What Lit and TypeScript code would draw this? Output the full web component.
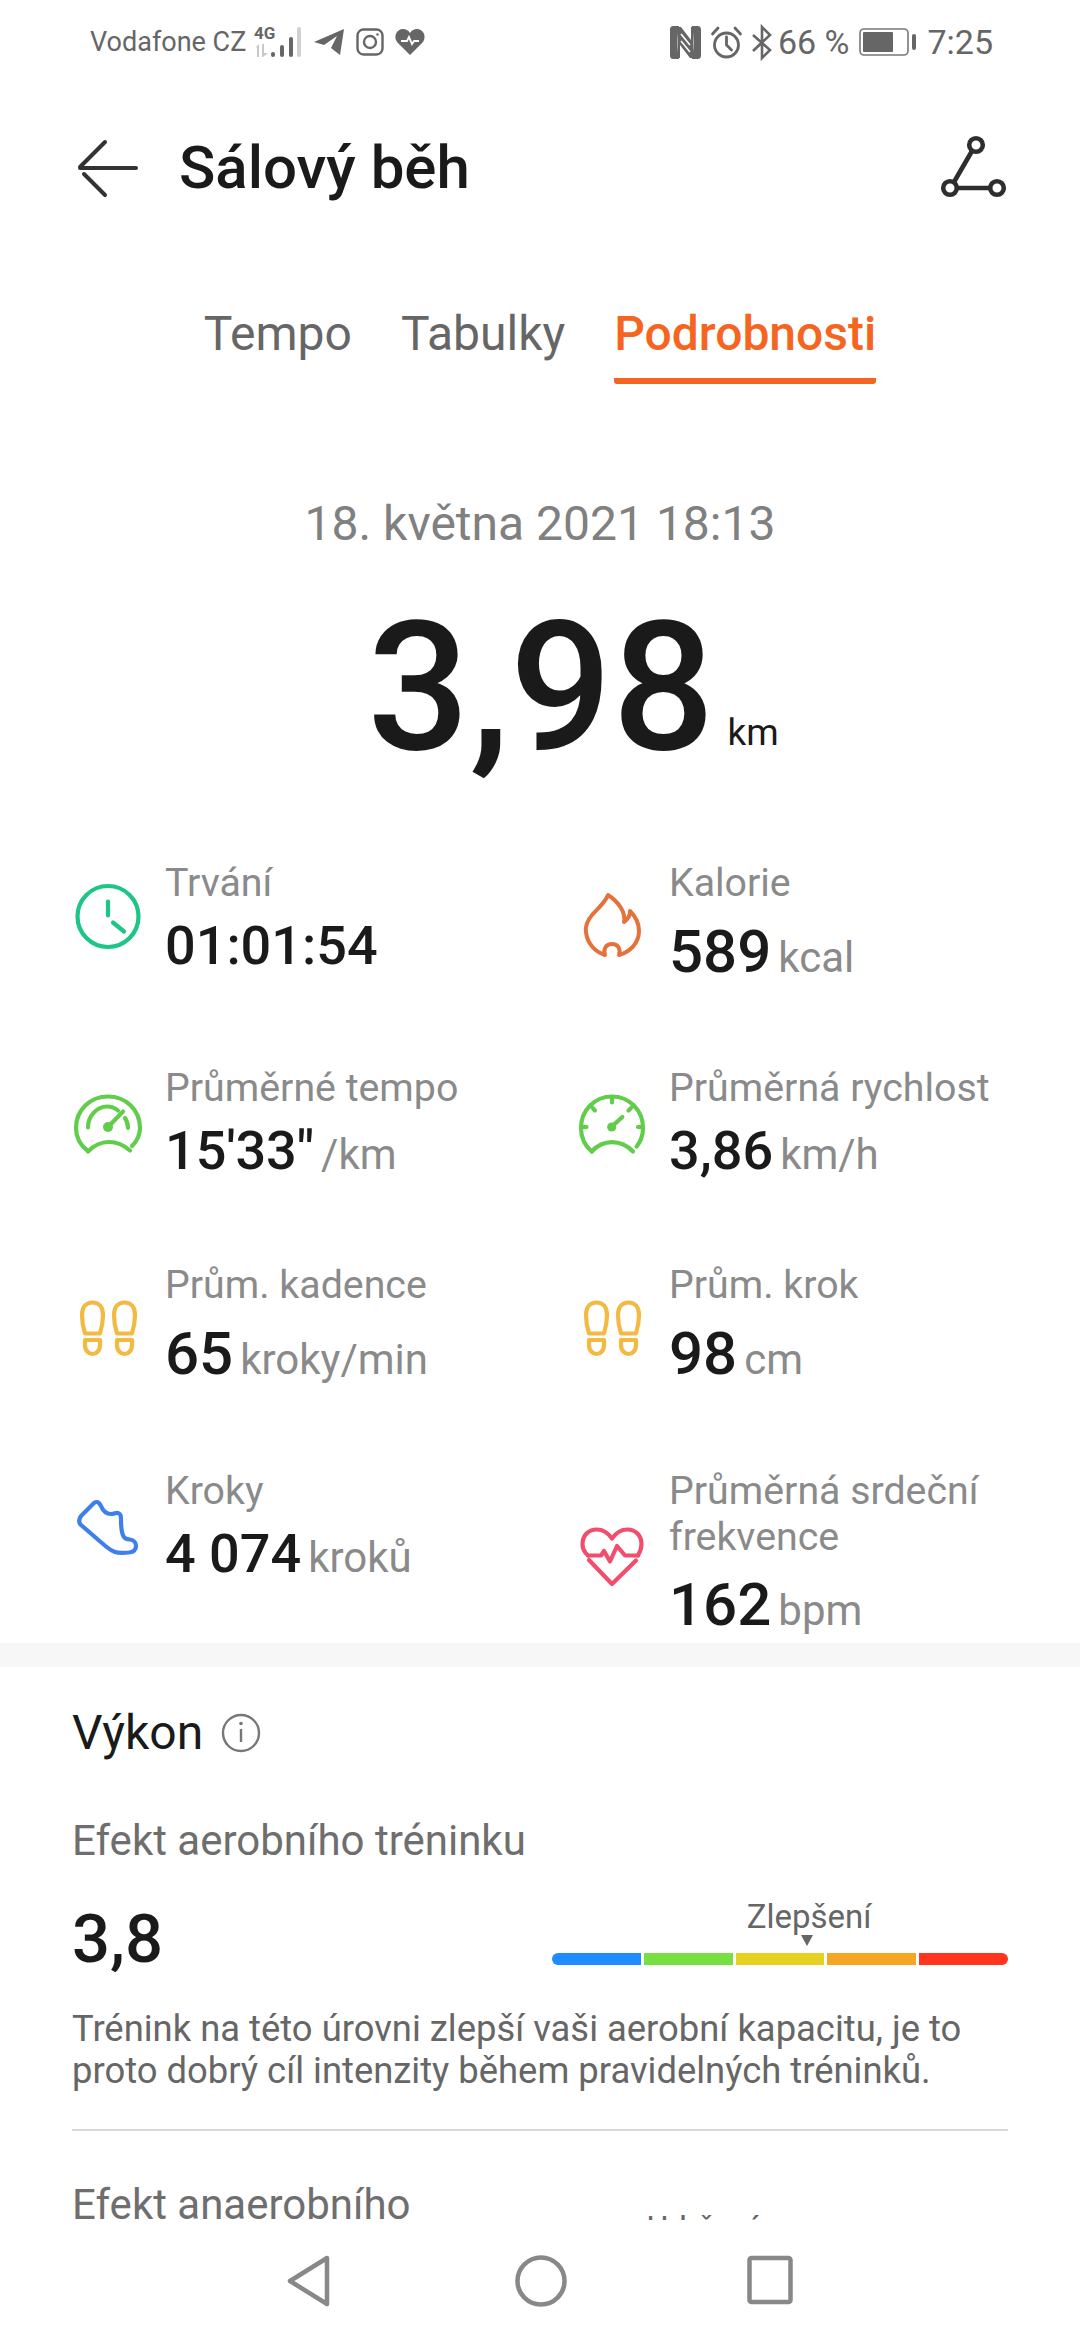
import { LitElement, html, css, svg } from "lit";
import { customElement } from "lit/decorators.js";

const G = "#666666";

const stepsIcon = svg`<g fill="none" stroke="#F3B941" stroke-width="4.2" stroke-linejoin="round"><path d="M13 42.5C11 36 10 30 10 24C10 16 14 11.5 20.5 11.5C27 11.5 31 16 31 24C31 30 30 36 28 42.5ZM45 42.5C43 36 42 30 42 24C42 16 46 11.5 52.5 11.5C59 11.5 63 16 63 24C63 30 62 36 60 42.5Z"/><path d="M13 49H28V54C28 60 24 63 20.5 63C17 63 13 60 13 54ZM45 49H60V54C60 60 56 63 52.5 63C49 63 45 60 45 54Z"/></g>`;

const icons: Record<string, unknown> = {
  clock: svg`<circle cx="36" cy="33.5" r="30.5" fill="none" stroke="#1DC587" stroke-width="4.2"/><path d="M36 18.5V32.5M41 39.5L52 48.5" fill="none" stroke="#1DC587" stroke-width="4.2" stroke-linecap="round"/>`,
  flame: svg`<path d="M32 6C29 14 21 20 16 26C11 32 9 37 10 43C11 54 19 63 29 66C27 60 30 55 36 55C42 55 45 60 43 66C54 63 63 54 63 42C63 34 59 27 54 22C54 27 51 31 48 33C50 24 43 13 32 6Z" fill="none" stroke="#E4733B" stroke-width="4" stroke-linejoin="round" stroke-linecap="round"/>`,
  gauge: svg`<g fill="none" stroke="#62CC4B" stroke-width="4.2" stroke-linecap="round"><path d="M16 61C8 55 4 47 4 38C4 20 18 6.5 36 6.5C54 6.5 68 20 68 38C68 45 65 51 60 56"/><path d="M16 61.5C28 49 45 49 58 60.5"/><path d="M16 37.5C16 26 25 16.5 35 16.5C39 16.5 43 18 46 20.5"/><path d="M53 28C55 31 56 34 56 38"/><path d="M37 36L51 21.5"/></g><circle cx="36" cy="37" r="5" fill="#62CC4B"/>`,
  gauge2: svg`<g fill="none" stroke="#62CC4B" stroke-width="4.2" stroke-linecap="round"><path d="M15.7 61.5C8.5 55.5 5 47 5 38C5 20 19 6.5 36 6.5C53 6.5 67 20 67 38C67 45 65 51 60.7 56.5"/><path d="M15.7 61.5C27 49 45 49 57 61.5"/><path d="M36 8V12.5M16.7 18L19 20.5M55 18L52.5 20.5M7 37H10.5M62 37H65"/><path d="M37 35.5L46.3 27"/></g><circle cx="35.7" cy="37" r="4.6" fill="#62CC4B"/>`,
  steps: stepsIcon,
  shoe: svg`<path d="M9 23L22 10C25 8 27 9 29 13C31 18 35 21 39 21C42 21 44 19.5 46 20C49 21 49 23 49 27C49 34 49 40 52 44C53 46 55 46 58 46.5C62 47 64 50 64 53C64 57 61 59 57 59.5C52 60 46 60 43 59C40 58 37 56 34 53.5L9 32C6 29 7 26 9 23Z" fill="none" stroke="#3F7FEC" stroke-width="4.2" stroke-linejoin="round"/>`,
  heart: svg`<g fill="none" stroke="#F24D6C" stroke-width="4.2" stroke-linejoin="round" stroke-linecap="round"><path d="M12 35.5C7 31 6.5 27 6.5 24C6.5 15 13 9.5 21 9.5C27 9.5 32 13 36 18.5C40 13 45 9.5 51 9.5C59 9.5 65.5 15 65.5 24C65.5 28 64 32 62 35.5"/><path d="M12 35.5H25L28 31L34 41.5L41 26L49 35.5H62"/><path d="M13 40L36 64L60 40.5"/></g>`,
};

const stats = [
  { icon: "clock", label: ["Trvání"], value: "01:01:54", unit: "", big: false },
  { icon: "flame", label: ["Kalorie"], value: "589", unit: "kcal", big: true },
  { icon: "gauge", label: ["Průměrné tempo"], value: "15'33\"", unit: "/km", big: false },
  { icon: "gauge2", label: ["Průměrná rychlost"], value: "3,86", unit: "km/h", big: false },
  { icon: "steps", label: ["Prům. kadence"], value: "65", unit: "kroky/min", big: true },
  { icon: "steps", label: ["Prům. krok"], value: "98", unit: "cm", big: true },
  { icon: "shoe", label: ["Kroky"], value: "4 074", unit: "kroků", big: false },
  { icon: "heart", label: ["Průměrná srdeční", "frekvence"], value: "162", unit: "bpm", big: true },
];

@customElement("app-root")
export class AppRoot extends LitElement {
  static styles = css`
    :host { display: block; width: 1080px; height: 2340px; background: #fff; overflow: hidden; font-family: Roboto, "Liberation Sans", sans-serif; color: #1a1a1a; }
    .page { display: flex; flex-direction: column; width: 1080px; height: 2340px; }
    .status { display: flex; justify-content: space-between; align-items: center; height: 84px; padding: 0 87px 0 90px; color: #666; font-size: 27px; flex: none; }
    .status .side { display: flex; align-items: center; gap: 10px; }
    .status .left { gap: 11px; }
    .status svg { display: block; flex: none; overflow: visible; }
    .status .tight { margin-left: -4px; }
    .status .sig { margin-left: -3px; margin-right: -1px; }
    .status .num { font-size: 34px; }
    .head { display: flex; align-items: center; height: 84px; margin-top: 42px; padding: 0 73px 0 76px; flex: none; }
    .head svg { display: block; overflow: visible; flex: none; }
    .head h1 { margin: 0 0 0 43px; font-size: 60px; font-weight: 500; flex: 1; line-height: 64px; }
    .tabs { display: flex; justify-content: center; gap: 49px; margin-top: 96px; flex: none; }
    .tab { font-size: 48px; line-height: 56px; color: #666; padding-bottom: 16px; border-bottom: 6px solid transparent; }
    .tab.on { color: #F5651F; font-weight: 500; border-bottom: 6px solid #F5651F; border-radius: 3px; }
    .date { text-align: center; font-size: 48px; line-height: 56px; color: #808080; margin-top: 112px; flex: none; }
    .dist { display: flex; justify-content: center; align-items: baseline; margin-top: 56px; height: 160px; padding-left: 66px; flex: none; }
    .dist b { font-size: 180px; font-weight: 500; line-height: 160px; }
    .dist span { font-size: 37px; margin: 0 0 4px 13px; position: relative; top: -4px; }
    .stats { display: grid; grid-template-columns: 504px 1fr; grid-template-rows: 205px 197px 206px 174px; align-items: start; padding: 0 0 0 72px; margin-top: 93px; flex: none; }
    .stat { display: flex; align-items: center; }
    .ic { width: 72px; height: 72px; margin-right: 21px; flex: none; }
    .ic svg { display: block; width: 72px; height: 72px; overflow: visible; }
    .lab { font-size: 39.3px; line-height: 45.5px; color: #8a8a8a; }
    .val { display: flex; align-items: baseline; margin-top: 7px; line-height: 64px; }
    .val b { font-size: 54px; font-weight: 500; color: #1a1a1a; }
    .val.big { margin-top: 13px; }
    .val.big b { font-size: 60px; }
    .val span { font-size: 42px; color: #8a8a8a; margin-left: 7px; }
    .band { height: 24px; background: #f7f7f7; flex: none; }
    .clip { flex: 1; min-height: 0; overflow: hidden; padding: 0 72px; }
    .perf { display: flex; align-items: center; margin-top: 38px; font-size: 48px; line-height: 56px; }
    .perf svg { margin-left: 18px; }
    .sub { font-size: 42px; line-height: 48px; color: #6e6e6e; margin-top: 56px; }
    .score { display: flex; justify-content: space-between; align-items: center; margin-top: 36px; height: 76px; }
    .score > b { font-size: 67px; font-weight: 500; }
    .gauge { position: relative; width: 456px; height: 76px; margin-top: -6px; }
    .gauge .t { text-align: center; font-size: 33px; line-height: 38px; color: #666; padding-left: 58px; }
    .bar { display: flex; gap: 3px; height: 12px; margin-top: 17px; }
    .bar i { flex: 1; }
    .bar i:first-child { border-radius: 6px 0 0 6px; }
    .bar i:last-child { border-radius: 0 6px 6px 0; }
    .mark { position: absolute; left: 249px; top: 37px; width: 0; height: 0; border-left: 6px solid transparent; border-right: 6px solid transparent; border-top: 11px solid #666; }
    .para { font-size: 36.4px; line-height: 42px; color: #666; margin-top: 31px; }
    hr { border: 0; border-top: 2px solid #d9d9d9; margin: 37px 0 0; }
    .anaer { display: flex; justify-content: space-between; align-items: flex-start; font-size: 42px; line-height: 48px; color: #6e6e6e; margin-top: 50px; }
    .anaer span { font-size: 33px; line-height: 38px; color: #666; margin: 29px 250px 0 0; }
    .nav { height: 120px; flex: none; display: flex; align-items: flex-start; padding: 35px 0 0 287px; gap: 184px; background: #fff; box-sizing: border-box; }
    .nav svg { display: block; }
    .nav svg:last-child { margin-left: -4px; }
  `;

  status() {
    return html`<div class="status">
      <div class="side left">
        <span>Vodafone CZ</span>
        <svg class="sig" width="50" height="34" viewBox="0 0 50 34" fill="${G}">
          <text x="0" y="14" font-size="17" font-weight="700" font-family="Roboto">4G</text>
          <path d="M2 22L5 19V32H3V23Z M8 32V19H10V28L14 28L9 32Z" fill="#c9c9c9"/>
          <rect x="17" y="27" width="4" height="5" rx="2"/><rect x="26" y="20" width="4" height="12" rx="2"/><rect x="35" y="12" width="4" height="20" rx="2"/><rect x="43" y="2" width="4" height="30" rx="2" fill="#d0d0d0"/>
        </svg>
        <svg width="31" height="28" viewBox="0 0 31 28" fill="${G}"><path d="M0 14L30 1L26 27L17 20L23 8L10 17Z"/></svg>
        <svg width="28" height="28" viewBox="0 0 28 28" fill="none" stroke="${G}" stroke-width="2.4"><rect x="1.5" y="1.5" width="25" height="25" rx="6"/><circle cx="14" cy="14" r="6"/><circle cx="21.5" cy="6.5" r="1.2" fill="${G}" stroke="none"/></svg>
        <svg width="30" height="28" viewBox="0 0 30 28"><path d="M15 27L2 14C-2 8 2 1 8 1C11 1 13 2 15 5C17 2 19 1 22 1C28 1 32 8 28 14Z" fill="${G}"/><path d="M6 13H12L14 9L17 16L19 13H24" fill="none" stroke="#fff" stroke-width="1.8"/></svg>
      </div>
      <div class="side">
        <svg width="31" height="33" viewBox="0 0 31 33" fill="${G}"><path d="M4 0H9C7 10 7 23 9 33H4C1 33 0 32 0 29V4C0 1 1 0 4 0Z"/><path d="M22 0H27C30 0 31 1 31 4V29C31 32 30 33 27 33H22C24 23 24 10 22 0Z"/><path d="M8 1H11L21 14V1H23V32H20L10 19V32H8Z"/><path d="M11 8L20 19M11 15L20 26" stroke="#fff" stroke-width="1.6"/></svg>
        <svg width="31" height="33" viewBox="0 0 31 33" fill="none" stroke="${G}" stroke-width="2.8"><circle cx="15.5" cy="19" r="12"/><path d="M15.5 11V19L20.5 24M1.5 8L7 2M29.5 8L24 2" stroke-linecap="round"/></svg>
        <svg width="20" height="33" viewBox="0 0 20 33" fill="none" stroke="${G}" stroke-width="2.6"><path d="M1 9L18 24L10 32V1L18 9L1 25"/></svg>
        <span class="num tight">66 %</span>
        <svg width="58" height="28" viewBox="0 0 58 28" fill="${G}"><rect x="1" y="1" width="48" height="26" rx="4" fill="none" stroke="#777" stroke-width="1.6"/><rect x="4" y="4" width="30" height="20" rx="1"/><rect x="53" y="6" width="4" height="16" rx="2"/></svg>
        <span class="num">7:25</span>
      </div>
    </div>`;
  }

  statItem(s: (typeof stats)[number]) {
    return html`<div class="stat">
      <div class="ic"><svg viewBox="0 0 72 72">${icons[s.icon]}</svg></div>
      <div>
        <div class="lab">${s.label.map((l) => html`<div>${l}</div>`)}</div>
        <div class="val ${s.big ? "big" : ""}"><b>${s.value}</b>${s.unit ? html`<span>${s.unit}</span>` : ""}</div>
      </div>
    </div>`;
  }

  render() {
    const colors = ["#1E8CFF", "#77DF40", "#E6D120", "#F5A623", "#FF3520"];
    return html`<div class="page">
      ${this.status()}
      <div class="head">
        <svg width="60" height="56" viewBox="0 0 60 56" fill="none" stroke="#333" stroke-width="4" stroke-linecap="round"><path d="M4 28H60M29 2L4 27M8 34L29 55"/></svg>
        <h1>Sálový běh</h1>
        <svg width="66" height="64" viewBox="0 0 66 64" fill="none" stroke="#2e2e2e" stroke-width="4.6"><circle cx="35" cy="9" r="6.8"/><circle cx="9" cy="52" r="6.8"/><circle cx="56" cy="52" r="6.8"/><path d="M31 15L13 46M16 52H49"/></svg>
      </div>
      <div class="tabs">
        <div class="tab">Tempo</div><div class="tab">Tabulky</div><div class="tab on">Podrobnosti</div>
      </div>
      <div class="date">18. května 2021 18:13</div>
      <div class="dist"><b>3,98</b><span>km</span></div>
      <div class="stats">${stats.map((s) => this.statItem(s))}</div>
      <div class="band"></div>
      <div class="clip">
        <div class="perf">Výkon<svg width="40" height="40" viewBox="0 0 40 40" fill="none" stroke="#777" stroke-width="2.4"><circle cx="20" cy="20" r="18"/><path d="M20 16V29"/><circle cx="20" cy="10.5" r="1.8" fill="#777" stroke="none"/></svg></div>
        <div class="sub">Efekt aerobního tréninku</div>
        <div class="score"><b>3,8</b>
          <div class="gauge"><div class="t">Zlepšení</div><div class="mark"></div>
            <div class="bar">${colors.map((c) => html`<i style="background:${c}"></i>`)}</div>
          </div>
        </div>
        <div class="para">Trénink na této úrovni zlepší vaši aerobní kapacitu, je to<br>proto dobrý cíl intenzity během pravidelných tréninků.</div>
        <hr>
        <div class="anaer"><div>Efekt anaerobního</div><span>Udržení</span></div>
      </div>
      <div class="nav">
        <svg width="44" height="52" viewBox="0 0 44 52" fill="none" stroke="#888" stroke-width="4.5" stroke-linejoin="round"><path d="M40 3L3 26L40 49Z"/></svg>
        <svg width="52" height="52" viewBox="0 0 52 52" fill="none" stroke="#888" stroke-width="4.5"><circle cx="26" cy="26" r="23.5"/></svg>
        <svg width="46" height="50" viewBox="0 0 46 50" fill="none" stroke="#888" stroke-width="4.5" stroke-linejoin="round"><rect x="2.5" y="3" width="41" height="44" rx="2"/></svg>
      </div>
    </div>`;
  }
}
